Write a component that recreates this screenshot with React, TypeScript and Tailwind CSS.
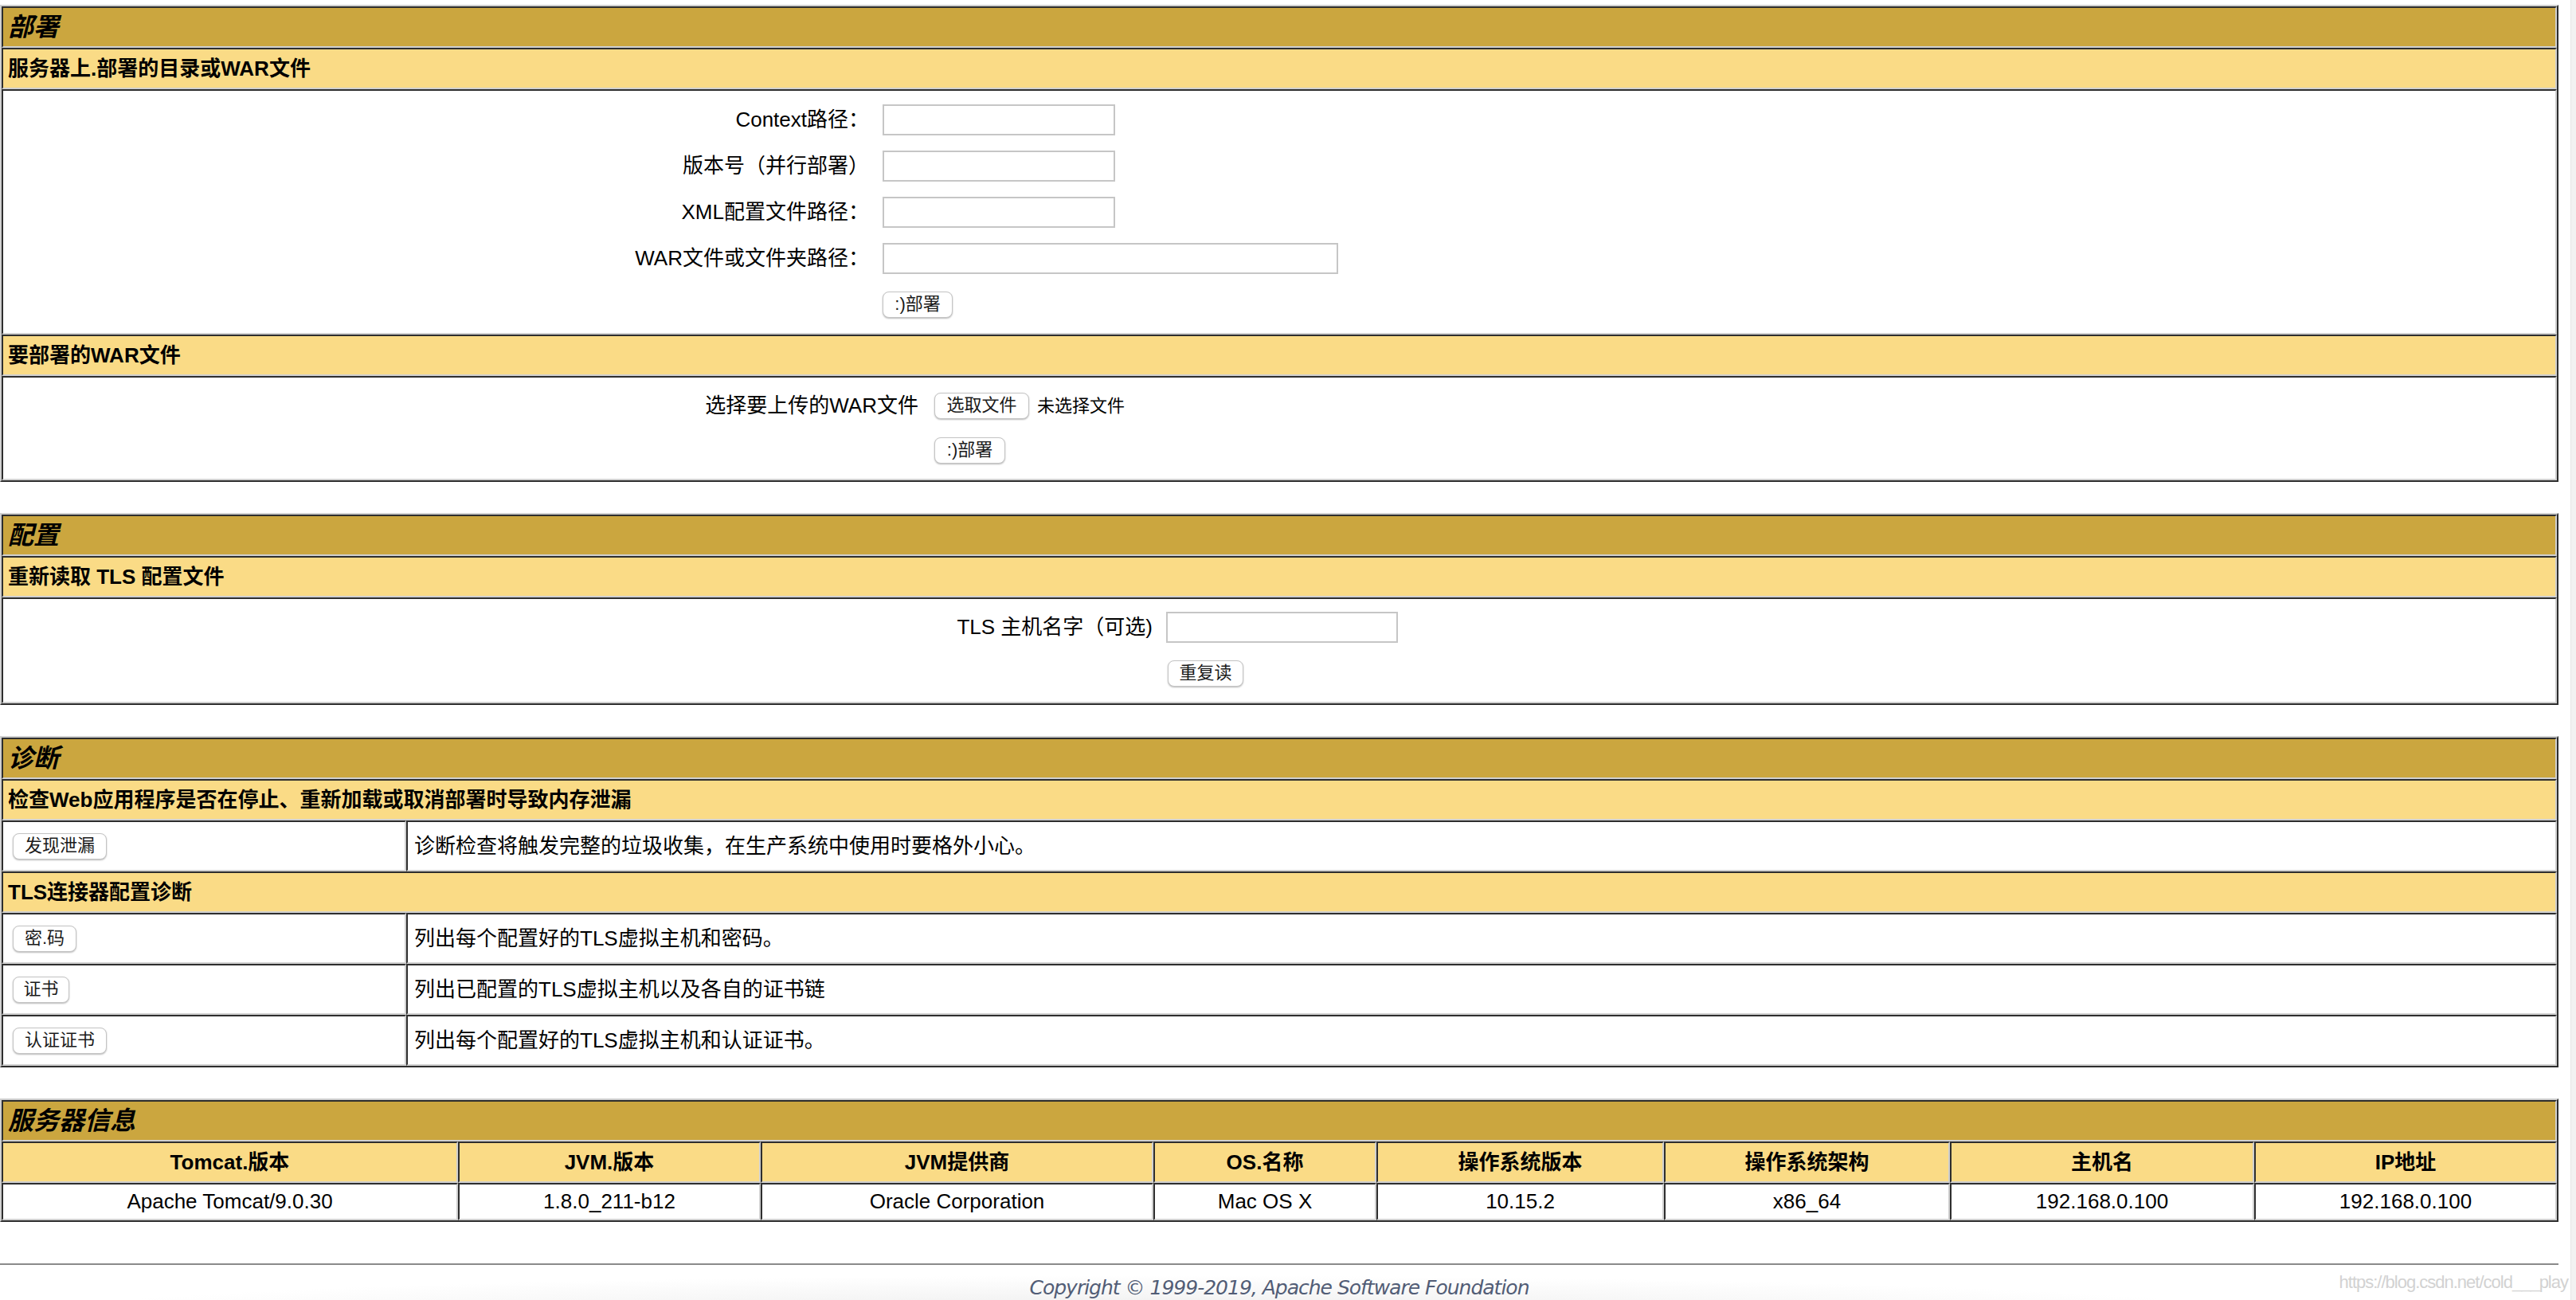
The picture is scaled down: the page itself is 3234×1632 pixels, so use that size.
import React from 'react';

const CELL =
  'border-2 border-t-[#2e2e2e] border-l-[#2e2e2e] border-r-[#d0d0d0] border-b-[#d0d0d0]';
const TABLE =
  'w-[3212px] border-2 border-t-[#d0d0d0] border-l-[#d0d0d0] border-r-[#2e2e2e] border-b-[#2e2e2e]';

const Title = ({ children }: { children: React.ReactNode }) => (
  <div className={`${CELL} h-[52px] bg-[#cba63f] px-[6px] flex items-center text-[32px] font-bold italic`}>
    {children}
  </div>
);

const SubHeader = ({ children }: { children: React.ReactNode }) => (
  <div className={`${CELL} h-[52px] bg-[#fadb86] px-[6px] flex items-center text-[26px] font-bold`}>
    {children}
  </div>
);

const Btn = ({ children, w }: { children: React.ReactNode; w: string }) => (
  <button
    className={`${w} h-[33px] rounded-[8px] bg-white border border-[#c4c4c4] shadow-[0_1px_2px_rgba(0,0,0,0.28)] text-[22px] leading-none text-[#1a1a1a] flex items-center justify-center shrink-0`}
  >
    {children}
  </button>
);

const TextInput = ({ w }: { w: string }) => (
  <input type="text" className={`${w} h-[39px] border-2 border-[#c6c6c6] bg-white outline-none`} />
);

const deployFields = [
  { label: 'Context路径：', w: 'w-[292px]' },
  { label: '版本号（并行部署）', w: 'w-[292px]' },
  { label: 'XML配置文件路径：', w: 'w-[292px]' },
  { label: 'WAR文件或文件夹路径：', w: 'w-[572px]' },
];

const tlsRows = [
  { btn: '密.码', w: 'w-[80px]', text: '列出每个配置好的TLS虚拟主机和密码。' },
  { btn: '证书', w: 'w-[71px]', text: '列出已配置的TLS虚拟主机以及各自的证书链' },
  { btn: '认证证书', w: 'w-[118px]', text: '列出每个配置好的TLS虚拟主机和认证证书。' },
];

const serverInfo = [
  { head: 'Tomcat.版本', value: 'Apache Tomcat/9.0.30', w: 'w-[573px]' },
  { head: 'JVM.版本', value: '1.8.0_211-b12', w: 'w-[380px]' },
  { head: 'JVM提供商', value: 'Oracle Corporation', w: 'w-[493px]' },
  { head: 'OS.名称', value: 'Mac OS X', w: 'w-[280px]' },
  { head: '操作系统版本', value: '10.15.2', w: 'w-[361px]' },
  { head: '操作系统架构', value: 'x86_64', w: 'w-[359px]' },
  { head: '主机名', value: '192.168.0.100', w: 'w-[382px]' },
  { head: 'IP地址', value: '192.168.0.100', w: 'w-[380px]' },
];

const App = () => {
  return (
    <div className="relative w-[3234px] h-[1632px] overflow-hidden bg-white text-black font-['Liberation_Sans','Noto_Sans_CJK_SC',sans-serif]">
      <div className="pt-[6px] flex flex-col gap-[39px]">
        {/* Deploy */}
        <div className={TABLE}>
          <Title>部署</Title>
          <SubHeader>服务器上.部署的目录或WAR文件</SubHeader>
          <div className={`${CELL} pt-[7px] pb-[7px] text-[26px]`}>
            {deployFields.map(f => (
              <div key={f.label} className="h-[58px] flex items-center gap-[17px]">
                <div className="w-[1087px] text-right">{f.label}</div>
                <TextInput w={f.w} />
              </div>
            ))}
            <div className="h-[58px] flex items-center gap-[17px]">
              <div className="w-[1087px]" />
              <Btn w="w-[88px]">:)部署</Btn>
            </div>
          </div>
          <SubHeader>要部署的WAR文件</SubHeader>
          <div className={`${CELL} pt-[7px] pb-[8px] text-[26px]`}>
            <div className="h-[56px] flex items-center gap-[20px]">
              <div className="w-[1149px] text-right">选择要上传的WAR文件</div>
              <div className="flex items-center gap-[10px]">
                <Btn w="w-[119px]">选取文件</Btn>
                <span className="text-[22px]">未选择文件</span>
              </div>
            </div>
            <div className="h-[56px] flex items-center gap-[20px]">
              <div className="w-[1149px]" />
              <Btn w="w-[89px]">:)部署</Btn>
            </div>
          </div>
        </div>

        {/* Config */}
        <div className={TABLE}>
          <Title>配置</Title>
          <SubHeader>重新读取 TLS 配置文件</SubHeader>
          <div className={`${CELL} pt-[6px] pb-[7px] text-[26px]`}>
            <div className="h-[58px] flex items-center gap-[17px]">
              <div className="w-[1443px] text-right">TLS 主机名字（可选)</div>
              <TextInput w="w-[291px]" />
            </div>
            <div className="h-[58px] flex items-center gap-[19px]">
              <div className="w-[1443px]" />
              <Btn w="w-[95px]">重复读</Btn>
            </div>
          </div>
        </div>

        {/* Diagnostics */}
        <div className={TABLE}>
          <Title>诊断</Title>
          <SubHeader>检查Web应用程序是否在停止、重新加载或取消部署时导致内存泄漏</SubHeader>
          <div className="flex">
            <div className={`${CELL} w-[508px] h-[64px] pl-[12px] flex items-center`}>
              <Btn w="w-[118px]">发现泄漏</Btn>
            </div>
            <div className={`${CELL} flex-1 h-[64px] pl-[8px] flex items-center text-[26px]`}>
              诊断检查将触发完整的垃圾收集，在生产系统中使用时要格外小心。
            </div>
          </div>
          <SubHeader>TLS连接器配置诊断</SubHeader>
          {tlsRows.map(r => (
            <div key={r.btn} className="flex">
              <div className={`${CELL} w-[508px] h-[64px] pl-[12px] flex items-center`}>
                <Btn w={r.w}>{r.btn}</Btn>
              </div>
              <div className={`${CELL} flex-1 h-[64px] pl-[8px] flex items-center text-[26px]`}>
                {r.text}
              </div>
            </div>
          ))}
        </div>

        {/* Server info */}
        <div className={TABLE}>
          <Title>服务器信息</Title>
          <div className="flex">
            {serverInfo.map(c => (
              <div
                key={c.head}
                className={`${CELL} ${c.w} h-[52px] bg-[#fadb86] flex items-center justify-center text-[26px] font-bold`}
              >
                {c.head}
              </div>
            ))}
          </div>
          <div className="flex">
            {serverInfo.map(c => (
              <div
                key={c.head}
                className={`${CELL} ${c.w} h-[47px] flex items-center justify-center text-[26px]`}
              >
                {c.value}
              </div>
            ))}
          </div>
        </div>
      </div>

      {/* Footer */}
      <div className="mt-[52px] w-[3212px] h-[2px] bg-[#8a8a8a]" />
      <div className="h-[60px] w-[3212px] bg-[radial-gradient(ellipse_at_45%_100%,#ededed_0%,#ffffff_55%)] flex justify-center pt-[14px]">
        <span className="text-[25px] leading-[30px] italic text-[#525d76] font-['DejaVu_Sans',sans-serif] tracking-[-1px]">
          Copyright © 1999-2019, Apache Software Foundation
        </span>
      </div>

      {/* watermark */}
      <div className="absolute right-[10px] bottom-[6px] text-[22px] text-[#d2d2d2] tracking-[-1px]">
        https://blog.csdn.net/cold___play
      </div>
      {/* scrollbar track */}
      <div className="absolute right-0 top-0 w-[7px] h-full bg-[#f2f2f2] border-l border-[#e6e6e6]" />
    </div>
  );
};

export default App;
